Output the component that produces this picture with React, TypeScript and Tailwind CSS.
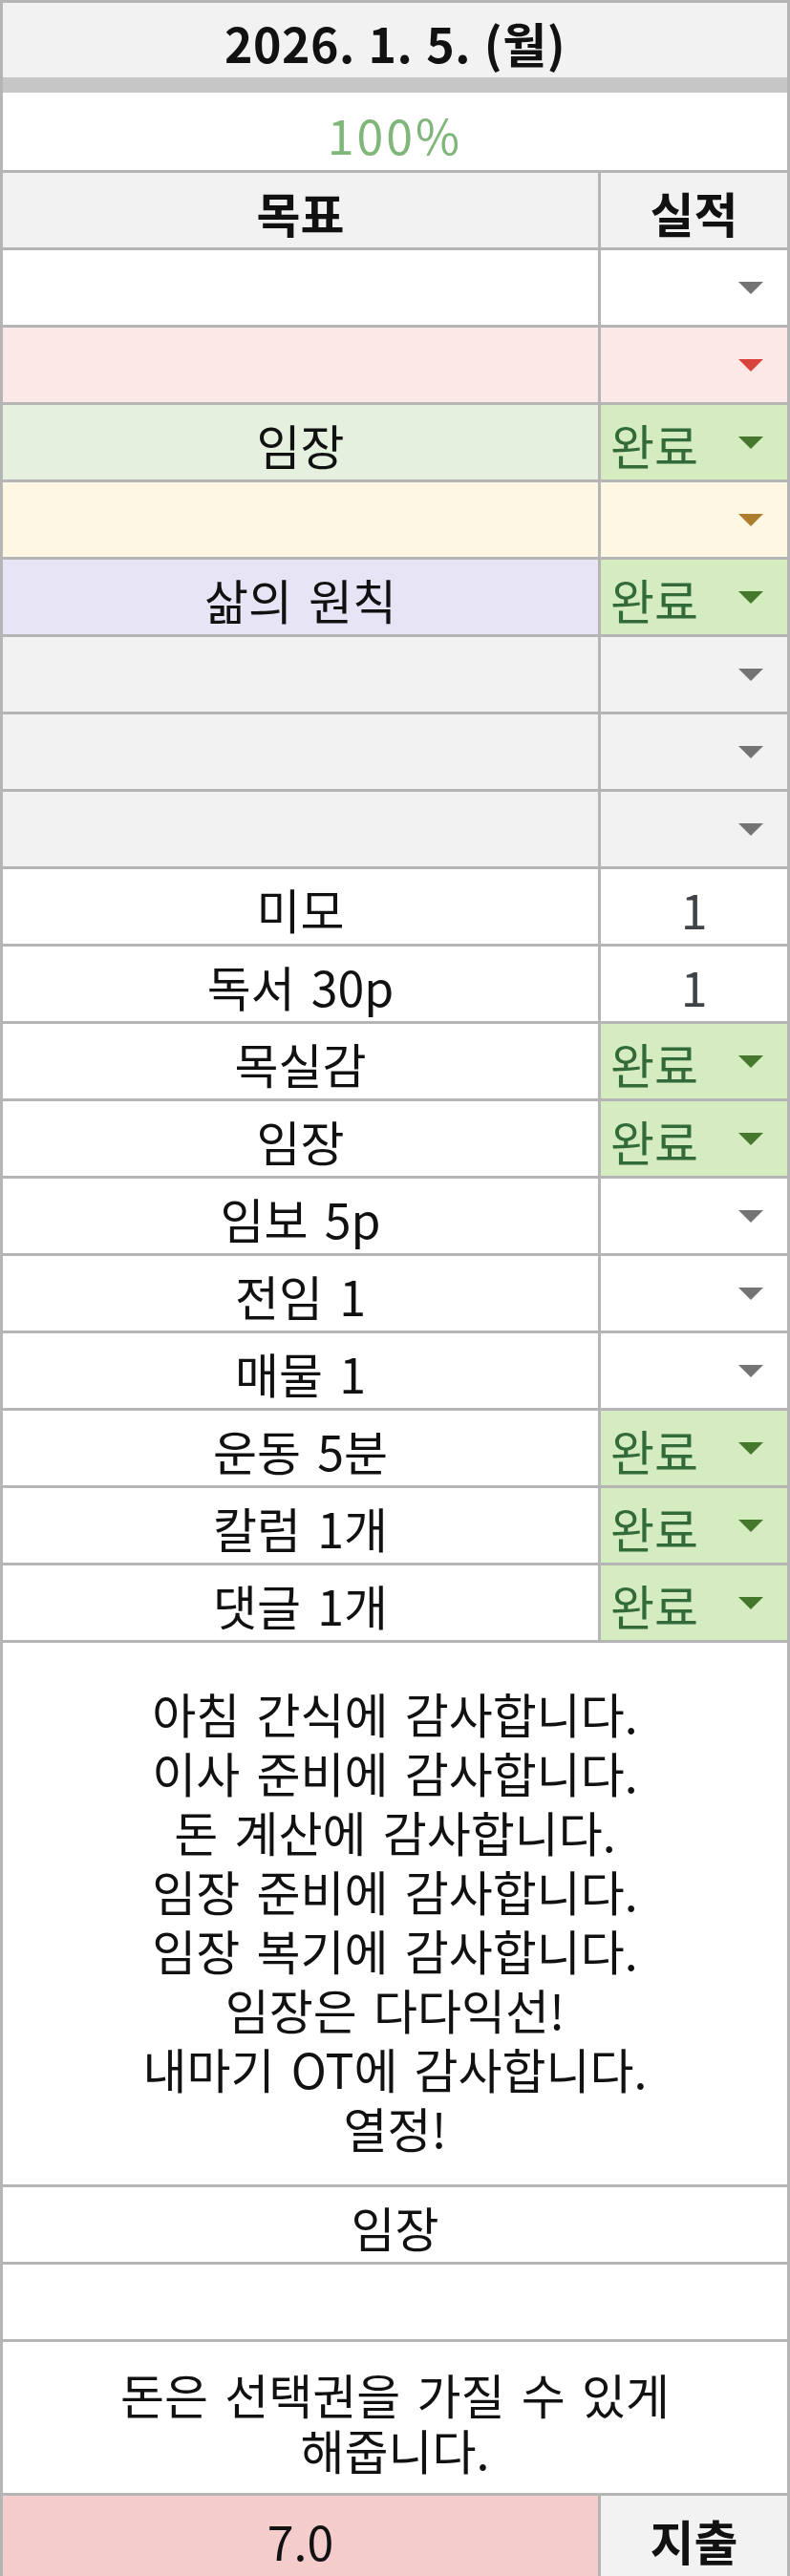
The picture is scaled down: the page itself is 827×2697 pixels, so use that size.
import React from "react";

type Row = {
  goal: string;
  leftBg: string;
  rightBg: string;
  kind: "arrow" | "done" | "num";
  arrow?: string;
  num?: string;
};

const rows: Row[] = [
  { goal: "", leftBg: "bg-white", rightBg: "bg-white", kind: "arrow", arrow: "#747474" },
  { goal: "", leftBg: "bg-[#fce8e6]", rightBg: "bg-[#fce8e6]", kind: "arrow", arrow: "#d8433b" },
  { goal: "임장", leftBg: "bg-[#e5f0de]", rightBg: "bg-[#d5ecc1]", kind: "done" },
  { goal: "", leftBg: "bg-[#fef7e3]", rightBg: "bg-[#fef7e3]", kind: "arrow", arrow: "#ad7d2e" },
  { goal: "삶의 원칙", leftBg: "bg-[#e7e4f5]", rightBg: "bg-[#d5ecc1]", kind: "done" },
  { goal: "", leftBg: "bg-[#f2f2f2]", rightBg: "bg-[#f2f2f2]", kind: "arrow", arrow: "#747474" },
  { goal: "", leftBg: "bg-[#f2f2f2]", rightBg: "bg-[#f2f2f2]", kind: "arrow", arrow: "#747474" },
  { goal: "", leftBg: "bg-[#f2f2f2]", rightBg: "bg-[#f2f2f2]", kind: "arrow", arrow: "#747474" },
  { goal: "미모", leftBg: "bg-white", rightBg: "bg-white", kind: "num", num: "1" },
  { goal: "독서 30p", leftBg: "bg-white", rightBg: "bg-white", kind: "num", num: "1" },
  { goal: "목실감", leftBg: "bg-white", rightBg: "bg-[#d5ecc1]", kind: "done" },
  { goal: "임장", leftBg: "bg-white", rightBg: "bg-[#d5ecc1]", kind: "done" },
  { goal: "임보 5p", leftBg: "bg-white", rightBg: "bg-white", kind: "arrow", arrow: "#747474" },
  { goal: "전임 1", leftBg: "bg-white", rightBg: "bg-white", kind: "arrow", arrow: "#747474" },
  { goal: "매물 1", leftBg: "bg-white", rightBg: "bg-white", kind: "arrow", arrow: "#747474" },
  { goal: "운동 5분", leftBg: "bg-white", rightBg: "bg-[#d5ecc1]", kind: "done" },
  { goal: "칼럼 1개", leftBg: "bg-white", rightBg: "bg-[#d5ecc1]", kind: "done" },
  { goal: "댓글 1개", leftBg: "bg-white", rightBg: "bg-[#d5ecc1]", kind: "done" },
];

const thanks = [
  "아침 간식에 감사합니다.",
  "이사 준비에 감사합니다.",
  "돈 계산에 감사합니다.",
  "임장 준비에 감사합니다.",
  "임장 복기에 감사합니다.",
  "임장은 다다익선!",
  "내마기 OT에 감사합니다.",
  "열정!",
];

function Arrow({ color }: { color: string }) {
  return (
    <svg width="26" height="13" viewBox="0 0 26 13">
      <polygon points="0,0 26,0 13,13" fill={color} />
    </svg>
  );
}

function StatusCell({ row }: { row: Row }) {
  if (row.kind === "num") {
    return <div className={`w-[195px] h-[78px] flex items-center justify-center pt-[4px] text-[#3f4347] ${row.rightBg}`}>{row.num}</div>;
  }
  return (
    <div className={`w-[195px] h-[78px] flex items-center justify-between pl-[10px] pr-[25px] ${row.rightBg}`}>
      <span className="text-[#336a3a] pt-[4px]">{row.kind === "done" ? "완료" : ""}</span>
      <Arrow color={row.kind === "done" ? "#45782c" : row.arrow!} />
    </div>
  );
}

export default function App() {
  return (
    <div className="w-[827px] h-[2697px] overflow-hidden bg-[#b5b5b5] pt-[3px] px-[3px] font-['Noto_Sans_CJK_KR','Noto_Sans',sans-serif] text-[50px] leading-none text-[#111] [word-spacing:6px]">
      {/* 날짜 */}
      <div className="h-[78px] bg-[#f2f2f2] flex items-center justify-center font-bold tracking-[0.5px] [word-spacing:2px] pt-[4px]">2026. 1. 5. (월)</div>
      <div className="h-[16px] bg-[#c6c6c6]" />

      {/* 달성률 */}
      <div className="h-[81px] bg-white flex items-center justify-center text-[#7fb67a] tracking-[3px] mb-[3px] pt-[4px]">100%</div>

      {/* 목표 / 실적 */}
      <div className="flex gap-[3px] mb-[3px]">
        <div className="w-[623px] h-[78px] bg-[#f2f2f2] flex items-center justify-center font-bold pt-[4px]">목표</div>
        <div className="w-[195px] h-[78px] bg-[#f2f2f2] flex items-center justify-center font-bold pt-[4px]">실적</div>
      </div>

      {rows.map((row, i) => (
        <div key={i} className="flex gap-[3px] mb-[3px]">
          <div className={`w-[623px] h-[78px] flex items-center justify-center pt-[4px] ${row.leftBg}`}>{row.goal}</div>
          <StatusCell row={row} />
        </div>
      ))}

      {/* 감사일기 */}
      <div className="h-[567px] bg-white flex flex-col items-center justify-center leading-[62px] mb-[3px] pt-[12px]">
        {thanks.map((t) => (
          <div key={t}>{t}</div>
        ))}
      </div>

      <div className="h-[78px] bg-white flex items-center justify-center mb-[3px] pt-[4px]">임장</div>
      <div className="h-[78px] bg-white mb-[3px]" />

      <div className="h-[158px] bg-white flex flex-col items-center justify-center leading-[58px] mb-[3px] pt-[8px]">
        <div>돈은 선택권을 가질 수 있게</div>
        <div>해줍니다.</div>
      </div>

      {/* 지출 */}
      <div className="flex gap-[3px]">
        <div className="w-[623px] h-[84px] bg-[#f4cccc] flex items-center justify-center pt-[8px]">7.0</div>
        <div className="w-[195px] h-[84px] bg-[#f2f2f2] flex items-center justify-center font-bold pt-[8px]">지출</div>
      </div>
    </div>
  );
}
